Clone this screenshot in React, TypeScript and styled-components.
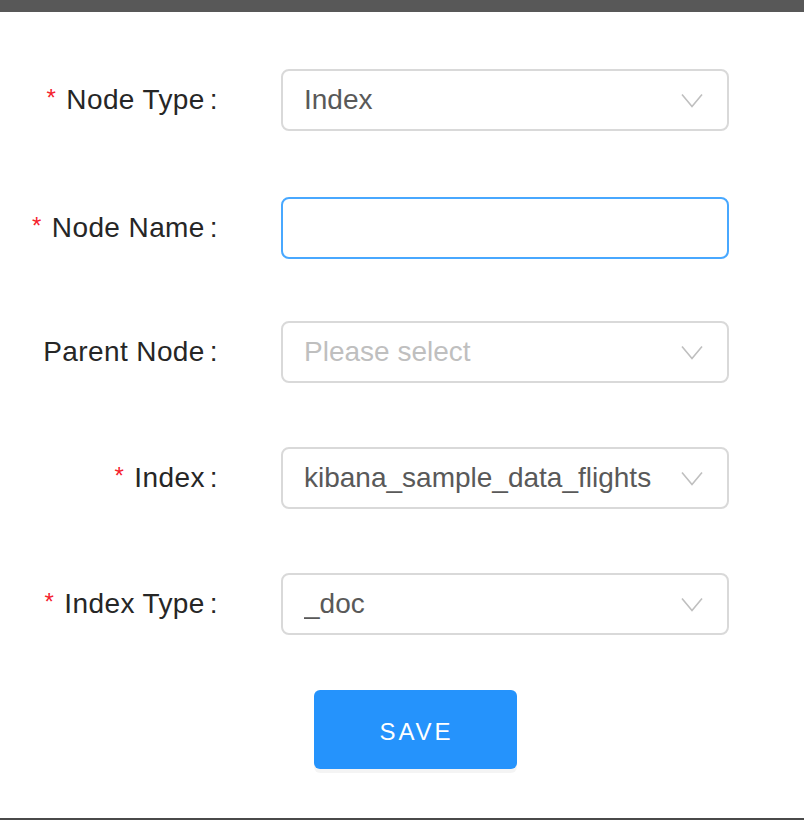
import React from "react";
import styled, { createGlobalStyle } from "styled-components";

const Global = createGlobalStyle`
  html, body { margin: 0; padding: 0; background: #ffffff; }
  body { font-family: "Liberation Sans", Arial, Helvetica, sans-serif; }
  * { box-sizing: border-box; }
`;

const Page = styled.div`
  width: 804px;
  height: 820px;
  display: flex;
  flex-direction: column;
  background: #ffffff;
`;

const TopBar = styled.div`
  height: 12px;
  background: #585858;
  flex: none;
`;

const Form = styled.form`
  flex: 1;
  display: flex;
  flex-direction: column;
  padding-top: 57px;
`;

const Row = styled.div<{ $gap: number }>`
  display: flex;
  align-items: center;
  height: 62px;
  margin-bottom: ${(p) => p.$gap}px;
`;

const Label = styled.label`
  width: 218px;
  flex: none;
  text-align: right;
  font-size: 28px;
  letter-spacing: 0.4px;
  color: #262626;
  white-space: nowrap;
  margin-right: 63px;
  line-height: 62px;
`;

const Star = styled.span`
  color: #f5222d;
  font-size: 24px;
  margin-right: 10px;
  position: relative;
  top: -3px;
`;

const Colon = styled.span`
  margin-left: 5px;
`;

const Box = styled.div<{ $focused?: boolean }>`
  width: 448px;
  height: 62px;
  border: 2px solid ${(p) => (p.$focused ? "#48a8ff" : "#d9d9d9")};
  border-radius: 8px;
  display: flex;
  align-items: center;
  padding: 0 24px 0 21px;
  background: #fff;
`;

const Value = styled.span<{ $placeholder?: boolean }>`
  flex: 1;
  font-size: 28px;
  color: ${(p) => (p.$placeholder ? "#bfbfbf" : "#595959")};
  white-space: nowrap;
  overflow: hidden;
`;

const Arrow = styled.svg`
  width: 22px;
  height: 15px;
  flex: none;
  margin-left: 8px;
`;

const ButtonRow = styled.div`
  display: flex;
  justify-content: center;
  padding-left: 26px;
`;

const SaveButton = styled.button`
  width: 203px;
  height: 79px;
  border: none;
  border-radius: 6px;
  background: #2593fc;
  color: #fff;
  font-family: "Liberation Sans", Arial, sans-serif;
  font-size: 24px;
  letter-spacing: 3px;
  box-shadow: 0 4px 0 rgba(0, 0, 0, 0.045);
  padding: 4px 0 0 3px;
`;

const BottomLine = styled.div`
  height: 2px;
  background: #4a4a4a;
  flex: none;
`;

const Chevron = () => (
  <Arrow viewBox="0 0 22 15">
    <path d="M1 1.5 L11 13.5 L21 1.5" fill="none" stroke="#bfbfbf" strokeWidth="1.6" />
  </Arrow>
);

type Field = {
  label: string;
  required: boolean;
  value?: string;
  placeholder?: string;
  select: boolean;
  focused?: boolean;
  gap: number;
};

const fields: Field[] = [
  { label: "Node Type", required: true, value: "Index", select: true, gap: 66 },
  { label: "Node Name", required: true, select: false, focused: true, gap: 62 },
  { label: "Parent Node", required: false, placeholder: "Please select", select: true, gap: 64 },
  { label: "Index", required: true, value: "kibana_sample_data_flights", select: true, gap: 64 },
  { label: "Index Type", required: true, value: "_doc", select: true, gap: 55 },
];

export default function App() {
  return (
    <Page>
      <Global />
      <TopBar />
      <Form onSubmit={(e) => e.preventDefault()}>
        {fields.map((f) => (
          <Row key={f.label} $gap={f.gap}>
            <Label>
              {f.required && <Star>*</Star>}
              {f.label}
              <Colon>:</Colon>
            </Label>
            <Box $focused={f.focused}>
              <Value $placeholder={!f.value}>{f.value ?? f.placeholder ?? ""}</Value>
              {f.select && <Chevron />}
            </Box>
          </Row>
        ))}
        <ButtonRow>
          <SaveButton type="submit">SAVE</SaveButton>
        </ButtonRow>
      </Form>
      <BottomLine />
    </Page>
  );
}
